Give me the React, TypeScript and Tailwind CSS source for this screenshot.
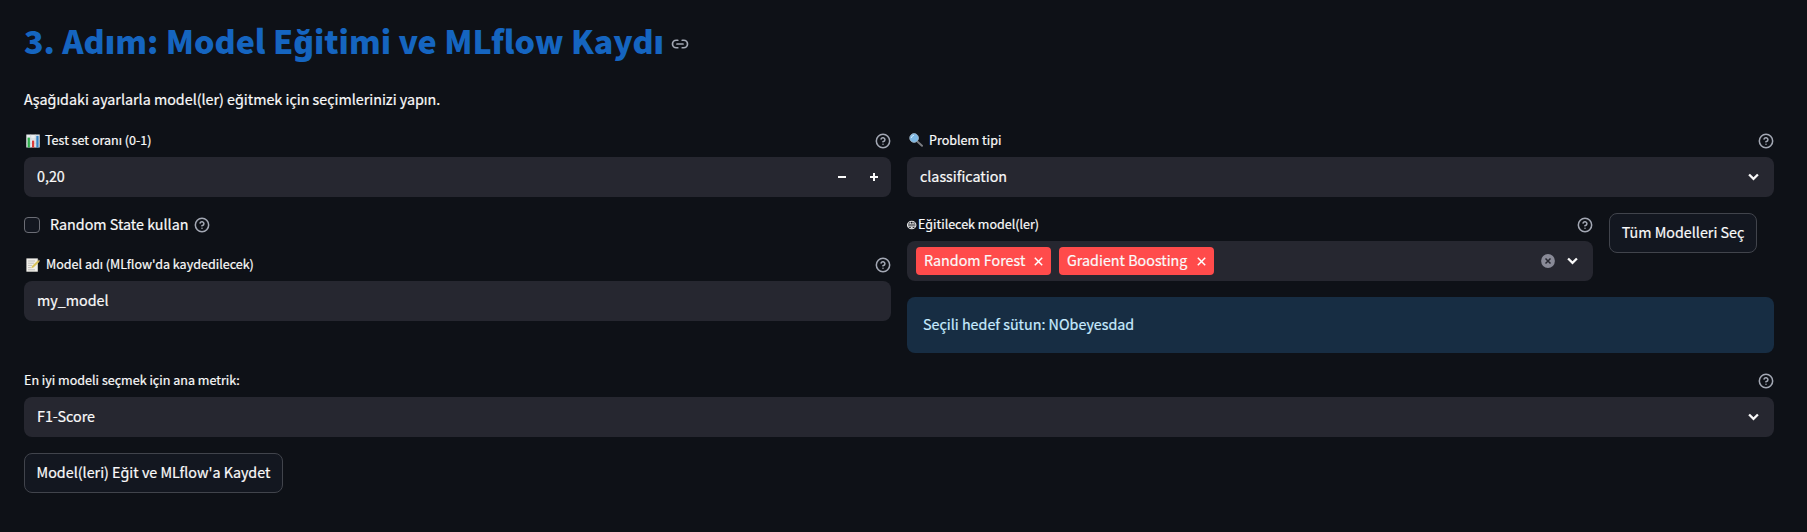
import type { ReactNode } from 'react';

function HelpIcon() {
  return (
    <svg viewBox="0 0 24 24" className="size-4 shrink-0 text-[#a3a8b4]" fill="none" stroke="currentColor" strokeWidth="2.3" strokeLinecap="round" strokeLinejoin="round">
      <circle cx="12" cy="12" r="10" />
      <path d="M9.09 9a3 3 0 0 1 5.83 1c0 2-3 3-3 3" />
      <path d="M12 17h.01" />
    </svg>
  );
}

function Chevron() {
  return (
    <svg viewBox="0 0 8 8" className="h-[11px] w-[11px] shrink-0" fill="#fafafa">
      <path d="M4 6.2 .2 2.4 1.4 1.2 4 3.8 6.6 1.2 7.8 2.4z" />
    </svg>
  );
}

function ChartEmoji() {
  return (
    <svg viewBox="0 0 14 14" className="ml-0.5 h-3.5 w-3.5 shrink-0">
      <rect x="0.3" y="0.5" width="13.4" height="13" fill="#e9edf0" />
      <path d="M0.3 5h13.4M0.3 9.2h13.4M4.7 .5v13M9.3 .5v13" stroke="#c3ccd3" strokeWidth="0.6" />
      <rect x="1.6" y="3.6" width="2.3" height="9.9" fill="#2fae4c" />
      <rect x="6" y="6.6" width="2.2" height="6.9" fill="#dc3a3a" />
      <rect x="10.3" y="1.8" width="2.3" height="11.7" fill="#3583c6" />
    </svg>
  );
}

function MemoEmoji() {
  return (
    <svg viewBox="0 0 14 14" className="mr-px mb-px ml-0.5 h-3.5 w-3.5 shrink-0">
      <rect x="0.4" y="0.4" width="11.4" height="13.3" fill="#f1efe9" />
      <path d="M2 3h7M2 5.2h6M2 7.4h4M2 9.6h3M2 11.8h7" stroke="#b6b4b0" strokeWidth="0.8" />
      <path d="m5.2 10.3.8-2.4 6-5.6 1.5 1.5-6 5.7z" fill="#d9c25c" />
      <path d="m12 2.3 .8-.8 1.2 1.3-.6 1z" fill="#a38b70" />
    </svg>
  );
}

function LensEmoji() {
  return (
    <svg viewBox="0 0 14 14" className="mr-px mb-0.5 ml-0.5 h-3.5 w-3.5 shrink-0">
      <path d="m8.6 8.8 4.4 4" stroke="#7c7e83" strokeWidth="1.9" strokeLinecap="round" />
      <circle cx="5.1" cy="5" r="4.4" fill="#7db8e4" stroke="#a3b8c8" strokeWidth="0.8" />
      <path d="M2.4 4.6a2.8 2.8 0 0 1 2.2-2.3" stroke="#d6ecfb" strokeWidth="1" fill="none" strokeLinecap="round" />
    </svg>
  );
}

function BrainGlyph() {
  return (
    <svg viewBox="0 0 10 10" className="mr-px mb-px h-2.5 w-2.5 shrink-0" fill="none" stroke="#e4e5e7" strokeWidth="1.1">
      <ellipse cx="4.7" cy="5" rx="4.2" ry="3.8" />
      <path d="M.8 4h7.800M1 6.100h7.400M3.300 2.200v1.700M6 2.200v1.700M3.700 7.600h2" />
    </svg>
  );
}

function Label({ icon, children }: { icon?: ReactNode; children: ReactNode }) {
  return (
    <div className="mb-1 flex h-6 items-center text-[12.55px]">
      {icon}
      <span className={icon ? 'pb-0.5 pl-[5px]' : 'pb-0.5'}>{children}</span>
      <span className="ml-auto"><HelpIcon /></span>
    </div>
  );
}

function Field({ children, end }: { children: string; end?: ReactNode }) {
  return (
    <div className="flex h-10 items-center justify-between rounded-lg bg-[#262730] pl-[13px]">
      <span className="pb-0.5">{children}</span>
      {end}
    </div>
  );
}

function Tag({ width, children }: { width: string; children: string }) {
  return (
    <span className={`mr-2 flex h-7 items-center justify-between rounded bg-[#ff4b4b] pr-2 pl-2 ${width}`}>
      <span className="pb-0.5">{children}</span>
      <svg viewBox="0 0 8 8" className="h-[9px] w-[9px]" stroke="#fff" strokeWidth="1.3"><path d="m.7.7 6.600 6.600M7.300.7.7 7.300" /></svg>
    </span>
  );
}

function Button({ children, className }: { children: string; className: string }) {
  return <button className={`flex h-10 shrink-0 items-center justify-center rounded-lg border border-[#41444c] bg-[#131720] pb-0.5 whitespace-nowrap ${className}`}>{children}</button>;
}

export default function App() {
  return (
    <main className="flex h-[532px] flex-col gap-4 bg-[#0e1117] pt-[18px] pr-[33px] pl-6 font-['Noto_Sans_CJK_JP','Noto_Sans_CJK_SC','Noto_Sans',sans-serif] text-[14.32px] leading-6 text-[#fafafa] [-webkit-text-stroke:0.2px]">
      <div className="mb-[9px] flex h-11 items-center">
        <h1 className="text-[32.22px] leading-[44px] font-black whitespace-nowrap text-[#1565c0] [-webkit-text-stroke:0px]">3. Adım: Model Eğitimi ve MLflow Kaydı</h1>
        <svg viewBox="0 0 24 24" className="mt-2 ml-[7px] size-[18px]" fill="none" stroke="#a3a8b4" strokeWidth="2.3" strokeLinecap="round">
          <path d="M9 17H7A5 5 0 0 1 7 7h2M15 7h2a5 5 0 0 1 0 10h-2M8 12h8" />
        </svg>
      </div>
      <p className="mb-0.5 h-6">Aşağıdaki ayarlarla model(ler) eğitmek için seçimlerinizi yapın.</p>
      <div className="grid grid-cols-2 gap-4">
        <section className="flex flex-col gap-4">
          <div>
            <Label icon={<ChartEmoji />}>Test set oranı (0-1)</Label>
            <Field
              end={
                <span className="flex gap-6 pr-[13px]">
                  <svg viewBox="0 0 8 8" className="size-2" fill="#fafafa"><path d="M0 3h8v2H0z" /></svg>
                  <svg viewBox="0 0 8 8" className="size-2" fill="#fafafa"><path d="M3 0h2v3h3v2H5v3H3V5H0V3h3z" /></svg>
                </span>
              }
            >
              0,20
            </Field>
          </div>
          <div className="flex h-6 items-center">
            <span className="size-4 rounded border border-[#6b6d75] bg-[#131720]" />
            <span className="mr-1.5 ml-2.5 pb-0.5">Random State kullan</span>
            <HelpIcon />
          </div>
          <div>
            <Label icon={<MemoEmoji />}>Model adı (MLflow'da kaydedilecek)</Label>
            <Field>my_model</Field>
          </div>
        </section>
        <section className="flex flex-col gap-4">
          <div>
            <Label icon={<LensEmoji />}>Problem tipi</Label>
            <Field end={<span className="pr-[15px]"><Chevron /></span>}>classification</Field>
          </div>
          <div className="flex gap-4">
            <div className="w-[686px]">
              <div className="mb-1 flex h-6 items-center text-[12.5px]">
                <BrainGlyph />
                <span className="pb-0.5">Eğitilecek model(ler)</span>
                <span className="ml-auto"><HelpIcon /></span>
              </div>
              <div className="flex h-10 items-center rounded-lg bg-[#262730] pr-[15px] pl-[9px]">
                <Tag width="w-[135px]">Random Forest</Tag>
                <Tag width="w-[155px]">Gradient Boosting</Tag>
                <svg viewBox="0 0 14 14" className="mr-3 ml-auto size-3.5"><circle cx="7" cy="7" r="6.9" fill="#898a97" /><path d="m4.500 4.500 5 5m0-5-5 5" stroke="#262730" strokeWidth="1.5" /></svg>
                <Chevron />
              </div>
            </div>
            <Button className="w-[148px]">Tüm Modelleri Seç</Button>
          </div>
          <div className="flex h-14 items-center rounded-lg bg-[#172d43] pb-0.5 pl-4 text-[#c7ebff]">Seçili hedef sütun: NObeyesdad</div>
        </section>
      </div>
      <div>
        <Label>En iyi modeli seçmek için ana metrik:</Label>
        <Field end={<span className="pr-[15px]"><Chevron /></span>}>F1-Score</Field>
      </div>
      <Button className="w-[259px]">Model(leri) Eğit ve MLflow'a Kaydet</Button>
    </main>
  );
}
